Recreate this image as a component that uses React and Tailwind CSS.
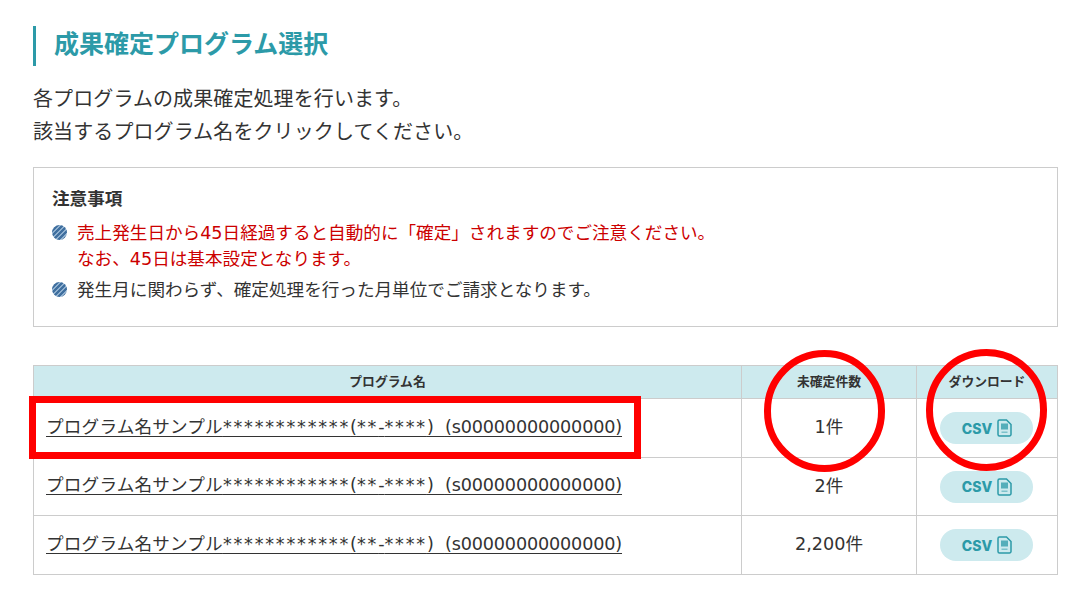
import React from 'react';

const rows = [
    { id: 1, count: '1件', height: 'h-[59px]' },
    { id: 2, count: '2件', height: 'h-[58px]' },
    { id: 3, count: '2,200件', height: 'h-[59px]' }
];

function CsvIcon() {
    return (
        <svg width="15" height="18" viewBox="0 0 15 18" fill="none" className="shrink-0">
            <path d="M2.5 1h7l4.5 4.5v10a1.500 1.500 0 0 1-1.500 1.500h-10A1.500 1.500 0 0 1 1 15.500v-13A1.500 1.500 0 0 1 2.500 1z" stroke="#2c9aa8" strokeWidth="1.500" />
            <rect x="4" y="4.500" width="7" height="6" fill="#2c9aa8" opacity="0.75" />
            <rect x="4.500" y="12.500" width="6" height="1.500" fill="#2c9aa8" opacity="0.5" />
        </svg>
    );
}

function Bullet() {
    return (
        <span className="mt-[5px] block w-[15px] h-[15px] shrink-0 rounded-full bg-[repeating-linear-gradient(135deg,#3f6f9f_0px,#3f6f9f_2px,#8fb0cf_2px,#8fb0cf_3.500px)]"></span>
    );
}

export default function App() {
    return (
        <div className="relative w-[1084px] h-[599px] overflow-hidden bg-white pl-[33px] pr-[26px] pt-[26px] text-[#333333] font-['DejaVu_Sans','Noto_Sans_CJK_JP',sans-serif]">
            <h1 className="h-[40px] border-l-[3px] border-[#2c9aa8] pl-[18px] text-[25px] leading-[38px] font-bold text-[#2c9aa8]">成果確定プログラム選択</h1>

            <p className="mt-[17px] text-[20px] leading-[33px] tracking-[0.1px]">
                各プログラムの成果確定処理を行います。<br />
                該当するプログラム名をクリックしてください。
            </p>

            <div className="mt-[18px] h-[160px] border border-[#cccccc] pl-[18px] pt-[19px]">
                <h2 className="text-[17.600px] leading-[24px] font-bold">注意事項</h2>
                <div className="mt-[9px] flex gap-[10px] text-[17.600px] leading-[26px] text-[#cc0000]">
                    <Bullet />
                    <p>売上発生日から45日経過すると自動的に「確定」されますのでご注意ください。<br />なお、45日は基本設定となります。</p>
                </div>
                <div className="mt-[5px] flex gap-[10px] text-[17.600px] leading-[26px]">
                    <Bullet />
                    <p>発生月に関わらず、確定処理を行った月単位でご請求となります。</p>
                </div>
            </div>

            <table className="mt-[38px] w-[1025px] table-fixed border-collapse">
                <thead>
                    <tr className="h-[33px] bg-[#cdeaee] text-[12.800px]">
                        <th className="border border-[#cccccc] font-bold">プログラム名</th>
                        <th className="w-[175px] border border-[#cccccc] font-bold">未確定件数</th>
                        <th className="w-[141px] border border-[#cccccc] font-bold">ダウンロード</th>
                    </tr>
                </thead>
                <tbody>
                    {rows.map((row) => (
                        <tr key={row.id} className={row.height}>
                            <td className="border border-[#cccccc] pb-[2px] pl-[12px] text-[17.600px]">
                                <a className="underline underline-offset-[3px]"><span className="tracking-[0.200px]">プログラム名サンプル</span><span className="tracking-[1.800px]">************</span>(<span className="tracking-[1.800px]">**</span>-<span className="tracking-[1.800px]">****</span>) &nbsp;<span className="tracking-[-0.150px]">(s00000000000000)</span></a>
                            </td>
                            <td className="border border-[#cccccc] pb-[1px] text-center text-[17.600px]">{row.count}</td>
                            <td className="border border-[#cccccc]">
                                <button className="ml-[23px] flex h-[32px] w-[93px] items-center justify-center gap-[5px] rounded-full bg-[#cdeaee] pl-[1px] font-['Inter',sans-serif] text-[14px] font-extrabold text-[#2c9aa8]">
                                    CSV <CsvIcon />
                                </button>
                            </td>
                        </tr>
                    ))}
                </tbody>
            </table>

            {/* annotations on top of the table */}
            <div className="absolute left-[29px] top-[396px] h-[63px] w-[612px] border-[7px] border-[#ff0000]"></div>
            <div className="absolute left-[764px] top-[350px] h-[122px] w-[121px] rounded-full border-[7px] border-[#ff0000]"></div>
            <div className="absolute left-[926px] top-[349px] h-[122px] w-[121px] rounded-full border-[7px] border-[#ff0000]"></div>
        </div>
    );
}
